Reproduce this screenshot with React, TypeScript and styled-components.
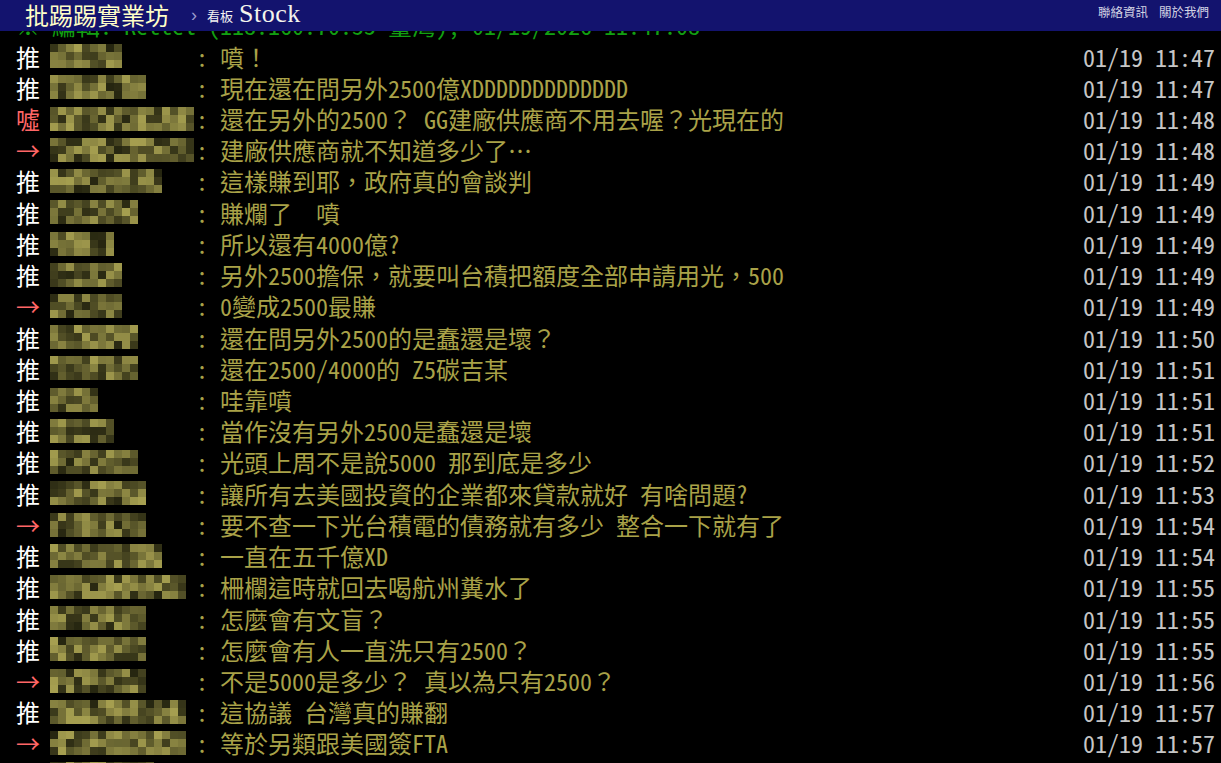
import styled, { createGlobalStyle } from 'styled-components';

const GlobalStyle = createGlobalStyle`
  html, body {
    margin: 0;
    padding: 0;
    background: #000;
    overflow: hidden;
  }
`;

const MONO = `"Noto Sans Mono CJK TC", "Liberation Mono", "Noto Sans CJK TC", monospace`;

const Page = styled.div`
  width: 1221px;
  height: 763px;
  background: #000;
  position: relative;
  overflow: hidden;
`;

const TopBar = styled.div`
  position: absolute;
  top: 0;
  left: 0;
  right: 0;
  height: 31px;
  background: #13136e;
  display: flex;
  align-items: center;
  padding: 0 12px 0 25px;
  z-index: 5;
`;

const SiteTitle = styled.span`
  font-family: "Noto Sans CJK TC", sans-serif;
  font-size: 24px;
  line-height: 31px;
  color: #ffffc8;
  margin-top: -3px;
`;

const Crumb = styled.span`
  font-family: "Liberation Sans", sans-serif;
  font-size: 18px;
  color: #9a9acc;
  margin: 0 10px 0 22px;
`;

const BoardLabel = styled.span`
  font-family: "Noto Sans CJK TC", sans-serif;
  font-size: 13px;
  color: #f2f2f2;
  margin-right: 6px;
`;

const BoardName = styled.span`
  font-family: "Liberation Serif", serif;
  font-size: 26px;
  color: #f4f4ec;
  letter-spacing: 0.5px;
  margin-top: -4px;
`;

const Spacer = styled.div`
  flex: 1;
`;

const TopLinks = styled.div`
  display: flex;
  gap: 11px;
  align-self: flex-start;
  padding-top: 2px;
`;

const TopLink = styled.span`
  font-family: "Noto Sans CJK TC", sans-serif;
  font-size: 12.5px;
  color: #d4d4e4;
`;

const Content = styled.div`
  padding: 9.4px 6px 0 16px;
  font-family: ${MONO};
  font-size: 24px;
  line-height: 31.23px;
  white-space: pre;
`;

const EditLine = styled.div`
  color: #12a012;
  height: 31.23px;
`;

const Row = styled.div`
  display: flex;
  align-items: center;
  height: 31.23px;
`;

const Tag = styled.span<{ $boo?: boolean }>`
  width: 34px;
  flex-shrink: 0;
  color: ${(p) => (p.$boo ? '#ff6666' : '#ffffff')};
`;

const UserId = styled.span`
  width: 146px;
  height: 31px;
  flex-shrink: 0;
  display: flex;
  align-items: center;
`;

const Text = styled.span`
  flex: 1;
  color: #a9a248;
`;

const Time = styled.span`
  color: #c6c6c6;
  flex-shrink: 0;
`;

type Push = { tag: string; blocks: number; text: string; time: string };

const pushes: Push[] = [
  { tag: '推', blocks: 9, text: '噴！', time: '01/19 11:47' },
  { tag: '推', blocks: 12, text: '現在還在問另外2500億XDDDDDDDDDDDDD', time: '01/19 11:47' },
  { tag: '噓', blocks: 18, text: '還在另外的2500？ GG建廠供應商不用去喔？光現在的', time: '01/19 11:48' },
  { tag: '→', blocks: 18, text: '建廠供應商就不知道多少了…', time: '01/19 11:48' },
  { tag: '推', blocks: 14, text: '這樣賺到耶，政府真的會談判', time: '01/19 11:49' },
  { tag: '推', blocks: 11, text: '賺爛了　噴', time: '01/19 11:49' },
  { tag: '推', blocks: 8, text: '所以還有4000億?', time: '01/19 11:49' },
  { tag: '推', blocks: 9, text: '另外2500擔保，就要叫台積把額度全部申請用光，500', time: '01/19 11:49' },
  { tag: '→', blocks: 9, text: '0變成2500最賺', time: '01/19 11:49' },
  { tag: '推', blocks: 11, text: '還在問另外2500的是蠢還是壞？', time: '01/19 11:50' },
  { tag: '推', blocks: 11, text: '還在2500/4000的 Z5碳吉某', time: '01/19 11:51' },
  { tag: '推', blocks: 6, text: '哇靠噴', time: '01/19 11:51' },
  { tag: '推', blocks: 8, text: '當作沒有另外2500是蠢還是壞', time: '01/19 11:51' },
  { tag: '推', blocks: 11, text: '光頭上周不是說5000 那到底是多少', time: '01/19 11:52' },
  { tag: '推', blocks: 12, text: '讓所有去美國投資的企業都來貸款就好 有啥問題?', time: '01/19 11:53' },
  { tag: '→', blocks: 12, text: '要不查一下光台積電的債務就有多少 整合一下就有了', time: '01/19 11:54' },
  { tag: '推', blocks: 14, text: '一直在五千億XD', time: '01/19 11:54' },
  { tag: '推', blocks: 17, text: '柵欄這時就回去喝航州糞水了', time: '01/19 11:55' },
  { tag: '推', blocks: 12, text: '怎麼會有文盲？', time: '01/19 11:55' },
  { tag: '推', blocks: 12, text: '怎麼會有人一直洗只有2500？', time: '01/19 11:55' },
  { tag: '→', blocks: 12, text: '不是5000是多少？ 真以為只有2500？', time: '01/19 11:56' },
  { tag: '推', blocks: 17, text: '這協議 台灣真的賺翻', time: '01/19 11:57' },
  { tag: '→', blocks: 17, text: '等於另類跟美國簽FTA', time: '01/19 11:57' },
  { tag: '推', blocks: 13, text: '以後什麼都要靠這個擔保就好了啦', time: '01/19 11:58' },
];

// tiny seeded rng so the mosaic is the same on every render
function rng(seed: number) {
  let s = seed * 9301 + 49297;
  return () => {
    s = (s * 9301 + 49297) % 233280;
    return s / 233280;
  };
}

function Mosaic({ cols, seed }: { cols: number; seed: number }) {
  const rand = rng(seed + 7);
  const cells: React.ReactNode[] = [];
  for (let r = 0; r < 3; r++) {
    for (let c = 0; c < cols; c++) {
      const v = rand();
      const dark = v < 0.22;
      const k = dark ? 0.05 + rand() * 0.2 : 0.25 + rand() * 0.6;
      const red = Math.round(30 + 160 * k);
      const green = Math.round(30 + 152 * k);
      const blue = Math.round(12 + 80 * k);
      cells.push(
        <rect
          key={`${r}-${c}`}
          x={c * 8}
          y={r * 8}
          width={8}
          height={8}
          fill={`rgb(${red},${green},${blue})`}
        />,
      );
    }
  }
  return (
    <svg width={cols * 8} height={24} viewBox={`0 0 ${cols * 8} 24`}>
      {cells}
    </svg>
  );
}

export default function App() {
  return (
    <Page>
      <GlobalStyle />
      <TopBar>
        <SiteTitle>批踢踢實業坊</SiteTitle>
        <Crumb>›</Crumb>
        <BoardLabel>看板</BoardLabel>
        <BoardName>Stock</BoardName>
        <Spacer />
        <TopLinks>
          <TopLink>聯絡資訊</TopLink>
          <TopLink>關於我們</TopLink>
        </TopLinks>
      </TopBar>
      <Content>
        <EditLine>※ 編輯: Kettel (118.160.70.55 臺灣), 01/19/2026 11:47:08</EditLine>
        {pushes.map((p, i) => (
          <Row key={i}>
            <Tag $boo={p.tag !== '推'}>{p.tag}</Tag>
            <UserId>
              <Mosaic cols={p.blocks} seed={i * 13 + 3} />
            </UserId>
            <Text>{': ' + p.text}</Text>
            <Time>{p.time}</Time>
          </Row>
        ))}
      </Content>
    </Page>
  );
}
